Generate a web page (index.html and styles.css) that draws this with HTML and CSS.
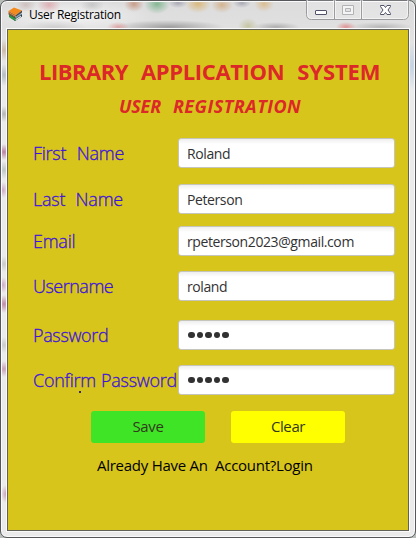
FILE: index.html
```html
<!DOCTYPE html>
<html lang="en">
<head>
<meta charset="utf-8">
<title>User Registration</title>
<link rel="stylesheet" href="styles.css">
</head>
<body>
<div class="window">
  <header class="titlebar">
    <svg class="app-icon" width="15" height="15" viewBox="0 0 15 15">
      <path d="M1 9.500 7 14 14 9.500 14 7 7 10 1 7z" fill="#263b3a"/>
      <path d="M1 7.500 7.500 11.500 7.500 14 1.500 10.500z" fill="#2f9a46"/>
      <path d="M7.500 12 13 8.500 13 10 7.500 13.500z" fill="#d8e2e4"/>
      <path d="M.5 5.500 7.500 9.500 7.500 11 .5 7.500z" fill="#7b5a3a"/>
      <path d="M7.500 9.500 13.500 5.500 13.500 7.500 7.500 11.500z" fill="#8ba7c4"/>
      <path d="M.5 4 6 .5 14 3.500 8 8z" fill="#f38a1d"/>
      <path d="M.5 4 8 8 8 9.500 .5 5.500z" fill="#c8681c"/>
      <path d="M8 8 14 3.500 14 5.500 8 9.500z" fill="#474747"/>
    </svg>
    <span class="caption">User Registration</span>
    <div class="controls">
      <svg width="104" height="20" viewBox="0 0 104 20">
        <path d="M.5 0V14.500Q.5 19.500 5.500 19.500H97.500Q102.500 19.500 102.500 14.500V0M28.500 0V19M55.500 0V19" fill="none" stroke="#9b9c9f"/>
        <path d="M1.500 0V14.500Q1.500 18.500 5.500 18.500H27.500V0M29.500 0V18.500H54.500V0M56.500 0V18.500H97.500Q101.500 18.500 101.500 14.500V0" fill="none" stroke="#fff" stroke-opacity=".55"/>
        <rect x="9.500" y="10.500" width="11" height="4" rx=".5" fill="#fff" stroke="#51536a"/>
        <path d="M36.500 5.500h11v9h-11zM39.500 8.500h5v3h-5z" fill="#f4f4f4" fill-rule="evenodd" stroke="#b2b3b6"/>
        <path d="M74.500 5.500h3.500l1.500 2 1.500-2h3.500v1l-2.500 3.500 2.500 3.500v1h-3.500l-1.500-2-1.500 2h-3.500v-1l2.500-3.500-2.500-3.500z" fill="#fff" stroke="#51536a"/>
      </svg>
    </div>
  </header>
  <main class="client">
    <h1><span class="w1">LIBRARY</span><span class="w2">APPLICATION</span><span class="w3">SYSTEM</span></h1>
    <h2><span class="w1">USER</span><span class="w2">REGISTRATION</span></h2>
    <form class="form">
      <label for="first">First&nbsp; Name</label><input id="first" type="text" value="Roland">
      <label for="last">Last&nbsp; Name</label><input id="last" type="text" value="Peterson">
      <label for="email">Email</label><input id="email" type="text" value="rpeterson2023@gmail.com">
      <label for="user" class="tight">Username</label><input id="user" type="text" value="roland">
      <label for="pass" class="password">Password</label><div id="pass" class="secret"><i></i><i></i><i></i><i></i><i></i></div>
      <label for="confirm" class="confirm">Confirm Password</label><div id="confirm" class="secret"><i></i><i></i><i></i><i></i><i></i></div>
    </form>
    <div class="actions">
      <button class="save" type="button">Save</button>
      <button class="clear" type="button">Clear</button>
    </div>
    <p class="login">Already Have An&nbsp; Account?Login</p>
  </main>
</div>
</body>
</html>
```
FILE: styles.css
```css
* { box-sizing: border-box; }
body {
  margin: 0;
  width: 416px;
  height: 538px;
  overflow: hidden;
  background: #b9bdb9;
  font-family: "Open Sans", "Noto Sans", sans-serif;
}
.window {
  width: 416px;
  height: 538px;
  padding: 0 6px 6px;
  border: 1px solid #55575a;
  border-radius: 7px;
  box-shadow: inset 0 0 0 1px #fafafa;
  background:
    radial-gradient(ellipse 10px 7px at 25px 4px, #8a443b33, transparent),
    radial-gradient(ellipse 12px 8px at 48px 4px, #d4646d66, transparent),
    radial-gradient(ellipse 12px 7px at 91px 4px, #55555533, transparent),
    radial-gradient(ellipse 10px 8px at 133px 3px, #b6653f88, transparent),
    radial-gradient(ellipse 13px 10px at 156px 3px, #499e6199, transparent),
    radial-gradient(ellipse 10px 5px at 177px 2px, #44446655, transparent),
    radial-gradient(ellipse 13px 9px at 197px 3px, #d69a2c88, transparent),
    radial-gradient(ellipse 11px 8px at 221px 4px, #c9853977, transparent),
    radial-gradient(ellipse 9px 5px at 241px 2px, #44446655, transparent),
    radial-gradient(ellipse 10px 8px at 263px 3px, #d7993d77, transparent),
    radial-gradient(ellipse 32px 7px at 54px 26px, #77777733, transparent),
    radial-gradient(ellipse 11px 5px at 117px 26px, #dd666677, transparent),
    radial-gradient(ellipse 55px 7px at 168px 26px, #66666688, transparent),
    radial-gradient(ellipse 10px 8px at 247px 25px, #a9a86077, transparent),
    radial-gradient(ellipse 24px 5px at 275px 26px, #66666666, transparent),
    radial-gradient(ellipse 10px 5px at 345px 26px, #e0505088, transparent),
    radial-gradient(ellipse 32px 5px at 380px 26px, #66666655, transparent),
    radial-gradient(ellipse 8px 11px at 3px 49px, #b0896477, transparent),
    radial-gradient(ellipse 8px 11px at 3px 74px, #78899977, transparent),
    radial-gradient(ellipse 7px 8px at 3px 113px, #77777777, transparent),
    radial-gradient(ellipse 8px 8px at 3px 151px, #a04c7eaa, transparent),
    radial-gradient(ellipse 7px 9px at 3px 169px, #8a9a9077, transparent),
    radial-gradient(ellipse 5px 8px at 2px 189px, #b060a077, transparent),
    radial-gradient(ellipse 7px 8px at 3px 263px, #88888855, transparent),
    radial-gradient(ellipse 5px 8px at 2px 284px, #b060a077, transparent),
    radial-gradient(ellipse 8px 9px at 3px 303px, #a04c7e99, transparent),
    radial-gradient(ellipse 7px 8px at 3px 344px, #88888855, transparent),
    radial-gradient(ellipse 7px 8px at 3px 368px, #a04c7e77, transparent),
    radial-gradient(ellipse 5px 9px at 5px 493px, #a04c7e77, transparent),
    radial-gradient(ellipse 8px 24px at 411px 65px, #8fb5de66, transparent),
    radial-gradient(ellipse 80px 16px at 70px 15px, #f4f4f4, transparent),
    linear-gradient(#dcdcdd, #e0e0e0 28px, #ebebec 90px);
}
.titlebar {
  display: flex;
  align-items: flex-start;
  height: 28px;
}
.app-icon { margin: 6px 0 0 1px; }
.caption {
  margin-left: 6px;
  padding-top: 6px;
  font-size: 12px;
  line-height: 16px;
  letter-spacing: -.27px;
  color: #000;
}
.controls {
  height: 20px;
  margin: -1px -1px 0 auto;
  border-radius: 0 0 5px 5px;
  background: #ffffff30;
}
.controls svg { display: block; }
.client {
  width: 402px;
  height: 502px;
  border: 1px solid #626259;
  box-shadow: 0 0 0 1px #fafafa;
  background: #d8c51b;
}
h1, h2 {
  display: flex;
  margin: 0;
  color: #dc2828;
  white-space: nowrap;
}
h1 {
  gap: 13px;
  padding: 26px 0 0 31px;
  font-size: 22px;
  line-height: 30px;
}
h1 .w1 { letter-spacing: -.5px; }
h1 .w2 { letter-spacing: -.35px; }
h1 .w3 { letter-spacing: -.1px; }
h2 {
  gap: 12px;
  padding: 8px 0 0 111px;
  font-size: 18px;
  line-height: 24px;
  font-style: italic;
}
h2 .w1 { letter-spacing: -.2px; }
h2 .w2 { letter-spacing: .5px; }
.form {
  display: grid;
  grid-template-columns: 145px 217px;
  grid-template-rows: 46px 42px 45px 49px 45px 30px;
  margin: 20px 0 0 25px;
}
label {
  height: 30px;
  font-size: 18px;
  font-weight: 300;
  -webkit-text-stroke: .3px #3c14d8;
  line-height: 31px;
  letter-spacing: -.25px;
  word-spacing: .8px;
  white-space: nowrap;
  color: #3c14d8;
}
.tight { letter-spacing: -.5px; }
.password { letter-spacing: -.35px; }
.confirm {
  position: relative;
  letter-spacing: -.27px;
}
.confirm::after {
  content: "";
  position: absolute;
  left: 46px;
  top: 26px;
  width: 1.5px;
  height: 1.5px;
  background: #3c2a70;
}
input, .secret {
  width: 217px;
  height: 30px;
  padding: 0 8px;
  border: 1px solid #c5c5bb;
  border-radius: 3px;
  background: linear-gradient(#eee, #fff 5px);
  font: 14px "Open Sans", "Noto Sans", sans-serif;
  letter-spacing: -.4px;
  color: #323232;
}
.secret {
  display: flex;
  align-items: center;
  gap: 2px;
  padding-left: 9px;
}
.secret i {
  width: 6.5px;
  height: 6.5px;
  border-radius: 50%;
  background: #323232;
}
.actions {
  display: flex;
  gap: 26px;
  margin: 16px 0 0 83px;
}
button {
  width: 114px;
  height: 32px;
  padding: 0 0 2px;
  border: 0;
  border-radius: 3px;
  font: 15px "Open Sans", "Noto Sans", sans-serif;
  letter-spacing: -.4px;
  color: #33391d;
}
.save { background: #3fe426; }
.clear { background: #ff0; }
.login {
  margin: 11px 0 0 89px;
  font-size: 15px;
  line-height: 22px;
  letter-spacing: -.26px;
  color: #000;
  white-space: nowrap;
}
```
